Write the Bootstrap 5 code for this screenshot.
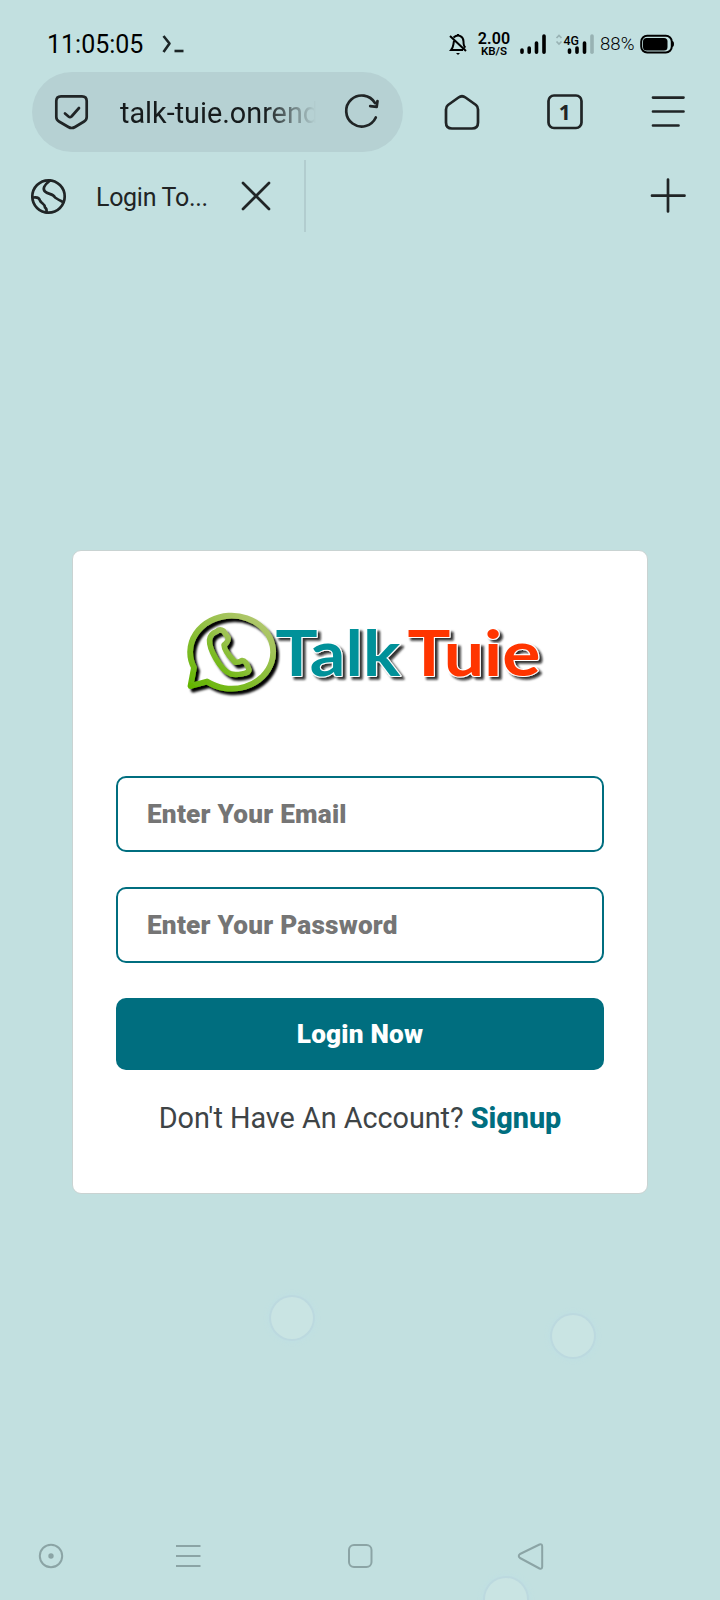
<!DOCTYPE html>
<html lang="en">
<head>
<meta charset="utf-8">
<meta name="viewport" content="width=device-width, initial-scale=1">
<title>Login To TalkTuie</title>
<link rel="stylesheet" href="https://cdn.jsdelivr.net/npm/bootstrap@5.3.0/dist/css/bootstrap.min.css">
<style>
body{background:#c2e0e0;font-family:Roboto,sans-serif;color:#202425;height:1600px}
.screen{width:720px;height:1600px}
svg{display:block;flex:none;overflow:visible}
.ico{fill:none;stroke:#202526;stroke-width:2.7;stroke-linecap:round;stroke-linejoin:round}
.status{height:72px;padding:15px 45px 0 47px;color:#000}
.clock{font-size:25px;letter-spacing:0;width:109px;line-height:1;padding-top:2px;font-weight:370}
.rate{width:34px;margin-right:9px;padding-top:2px}
.rate-num{font:600 16px/14px Roboto,sans-serif;letter-spacing:.1px}
.rate-unit{font:600 11.5px/11px Roboto,sans-serif}
.percent{font-size:18.6px;font-weight:300;width:38px;line-height:1;padding-left:2px;padding-top:1px}
.tools{height:80px;padding:0 34px 0 32px}
.address{width:371px;height:80px;border-radius:40px;background:#b6d1d3;padding:0 24px 0 22px}
.url{width:200px;font-size:28.8px;line-height:40px;margin-left:30px;padding-top:2px;overflow:hidden;color:#161b1c;
 -webkit-mask-image:linear-gradient(90deg,#000 72%,transparent 98%);mask-image:linear-gradient(90deg,#000 72%,transparent 98%)}
.home-key{margin-left:40px}
.count-key{margin-left:65px}
.tabs-row{height:88px;padding:0 34px 0 0}
.tab-item{width:306px;height:72px;border-right:2px solid #b2cdcf;padding-left:30px;margin-top:8px}
.tab-name{width:175px;padding-left:29px;padding-top:3px;font-size:25px;letter-spacing:-.3px;line-height:32px}
.page-area{height:1266px;padding-top:311px}
.login{width:576px;height:644px;border:1px solid #c9d3d2;border-radius:9px;padding:42px 43px;background:#fff;margin-top:-1px}
.logo-box{height:183px}
.field{height:76px;border:2px solid #006e7f;border-radius:10px;padding:0 29px;font-size:26.2px;font-weight:900;letter-spacing:.22px;margin-bottom:35px}
.field::placeholder{color:#757575;opacity:1}
.enter{height:72px;background:#006e7f;color:#fff;border:0;border-radius:10px;font-size:26.2px;font-weight:900;letter-spacing:.2px;padding-top:8px}
.ask{font-size:28.8px;line-height:40px;color:#3e4446;margin-top:28px;white-space:nowrap;letter-spacing:-.03px}
.ask a{color:#006e7f;font-weight:850}
.navkeys{height:94px;padding:36px 177px 0 38px}
.key{fill:none;stroke:#8ba4a5;stroke-width:2;stroke-linejoin:round}
.bubble{position:absolute;width:42px;height:42px;border-radius:50%;background:#c9e4e3;box-shadow:0 0 0 2px #bcd9df,0 0 5px 3px #bfdfe3}
</style>
</head>
<body>
<div class="screen position-relative overflow-hidden mx-auto">
 <header>
  <div class="status d-flex align-items-center">
   <span class="clock text-nowrap">11:05:05</span>
   <svg width="28" height="22" viewBox="156 33 28 22" fill="none" stroke="#1b2526" stroke-width="2.6"><path d="M163.500 36l6 7.500-6 8.500" stroke-linejoin="round"/><path d="M174.500 51h9" /></svg>
   <svg class="ms-auto" width="20" height="22" viewBox="448 33 20 22" fill="none" stroke="#000" stroke-width="2"><path d="M449 36l16 15M453 41c-1 4 0 5-3 9h12M452.500 37.500c5-4 10-1 10 4q0 5 2 6"/><path d="M455 53h4l-2 2zM456 34h2v2h-2z" fill="#000" stroke="none"/></svg>
   <div class="rate ms-2 text-center"><div class="rate-num">2.00</div><div class="rate-unit">KB/S</div></div>
   <svg width="78" height="22" viewBox="520 33 78 22"><g stroke="#000" stroke-width="3.6" stroke-linecap="round"><path d="M522 50v2.200M529.200 48v4.200M536.500 43v9.200M544 36v16.200M569.500 50v2.200M577 48v4.200M584.500 43v9.200"/><path d="M592 36v16.200" stroke="#98b2b3"/></g><path d="M556.500 38l2.500-2.500 2.500 2.500M556.500 41.500l2.500 2.500 2.500-2.500" fill="none" stroke="#98b2b3" stroke-width="1.700"/><text x="563.500" y="45.200" font-size="13" font-weight="500" textLength="15.500" lengthAdjust="spacingAndGlyphs">4G</text></svg>
   <span class="percent text-nowrap">88%</span>
   <svg class="ms-1" width="35" height="22" viewBox="640 33 35 22"><rect x="641.200" y="35.700" width="30.600" height="16.800" rx="6" fill="none" stroke="#000" stroke-width="2"/><rect x="643" y="38" width="24.500" height="12.500" rx="3.500"/><path d="M672 41q2 0 2 3t-2 3z"/></svg>
  </div>
  <div class="tools d-flex align-items-center">
   <div class="address d-flex align-items-center">
    <svg class="ico" width="36" height="38" viewBox="54 93 36 38"><path d="M61 96.400H82q4.700 0 4.700 4.700V117q0 3-2.600 4.500L75 127q-3.300 2-6.600 0L59 121.500q-2.700-1.500-2.700-4.500V101.100q0-4.700 4.700-4.700z"/><path d="M65 113.500l3.500 3q1.500 1.200 3 0l7.500-8.500"/></svg>
    <div class="url text-nowrap">talk-tuie.onrend</div>
    <svg class="ico ms-auto" width="36" height="38" viewBox="341.500 93 36 38"><path d="M374.300 117.500A15.500 15.500 0 1 1 373.500 103"/><path d="M376 101l-.8 5.800-6.500-.6"/></svg>
   </div>
   <svg class="ico home-key" width="38" height="38" viewBox="443 92.500 38 38"><path d="M448 104.500L458.500 97q3.500-2.500 7 0L476 104.500q2 1.500 2 4.500v13q0 6-6 6H452q-6 0-6-6V109q0-3 2-4.500z"/></svg>
   <svg class="ico count-key" width="38" height="38" viewBox="546 93 38 38"><rect x="548.500" y="95.500" width="33" height="32.500" rx="5.500"/><text x="558.700" y="119.800" font-size="21" font-family="Noto Sans" font-weight="700" stroke="none" fill="#202526">1</text></svg>
   <svg class="ico ms-auto" width="35" height="38" viewBox="651 93 35 38"><path d="M653 97.600h30.500M653 111.500h30.500M653 125.500h25.500"/></svg>
  </div>
  <div class="tabs-row d-flex">
   <div class="tab-item d-flex align-items-center">
    <svg class="ico" width="37" height="37" viewBox="30 177.500 37 37"><circle cx="48.500" cy="196" r="16.200"/><path d="M50 180q-9 7-5 11c3 3 8 2 10 6q3 2 7 4M33 197q6-1 7 3c1 3 5 3 5 7q2 1 1.500 5"/></svg>
    <span class="tab-name text-nowrap">Login To...</span>
    <svg class="ico" width="28" height="30" viewBox="242 181 28 30"><path d="M243 183l26 26M269 183l-26 26"/></svg>
   </div>
   <svg class="ico ms-auto mt-4" width="36" height="40" viewBox="650 176 36 40"><path d="M652 195.700h32.500M668 179.500v32"/></svg>
  </div>
 </header>
 <main class="page-area">
  <form class="login card mx-auto">
   <div class="logo-box">
    <svg width="488" height="120" viewBox="116 593 488 120" role="img" aria-label="Talk Tuie">
     <defs>
      <linearGradient id="leaf" x1="0" y1="1" x2=".75" y2="0"><stop offset="0" stop-color="#62b500"/><stop offset="1" stop-color="#b0c76c"/></linearGradient>
      <filter id="drop" x="-10%" y="-20%" width="125%" height="150%"><feDropShadow dx="3" dy="3.500" stdDeviation="1" flood-color="#000" flood-opacity="1"/></filter>
      <filter id="textdrop" x="-10%" y="-20%" width="125%" height="150%"><feDropShadow dx="3" dy="2.700" stdDeviation="1.200" flood-color="#111" flood-opacity=".85"/></filter>
     </defs>
     <g filter="url(#drop)" fill="none" stroke="url(#leaf)" stroke-width="5.800" stroke-linejoin="round">
      <path d="M194 667.500A41.500 36.500 0 1 1 207 681.500L190.500 686z"/>
      <path d="M216.500 631.500Q220 628.500 223.500 631L228 637.500Q229 641 224 645C224 650 231 658 235 662Q237 663 242 660.500Q246 660 249 670C249 674 236 675 231 674C220 670 209 649 209.500 640Q210 634 216.500 631.500z" stroke-width="5.500"/>
     </g>
     <g filter="url(#textdrop)" font-family="Lato,sans-serif" font-weight="700" font-size="63" stroke="#fff" stroke-width="2" stroke-linejoin="round" paint-order="stroke">
      <text x="275.500" y="675.500" textLength="125" lengthAdjust="spacingAndGlyphs" fill="#009199">Talk</text>
      <text x="407.500" y="675.500" textLength="133" lengthAdjust="spacingAndGlyphs" fill="#ff3600">Tuie</text>
     </g>
    </svg>
   </div>
   <input class="field form-control" type="email" placeholder="Enter Your Email">
   <input class="field form-control" type="password" placeholder="Enter Your Password">
   <button class="enter btn w-100" type="button">Login Now</button>
   <div class="ask text-center">Don't Have An Account? <a class="text-decoration-none" href="#">Signup</a></div>
  </form>
 </main>
 <span class="bubble" style="left:271px;top:1297px"></span>
 <span class="bubble" style="left:552px;top:1315px"></span>
 <span class="bubble" style="left:485px;top:1578px"></span>
 <footer class="navkeys d-flex justify-content-between align-items-start">
  <svg class="key" width="26" height="28" viewBox="38 1542 26 28"><circle cx="51" cy="1556" r="11.200"/><circle cx="51" cy="1556" r="2.700" fill="#8ba4a5" stroke="none"/></svg>
  <svg class="key" style="margin-left:35px" width="26" height="28" viewBox="175 1542 26 28"><path d="M176 1546h24.500M176 1556h24.500M176 1566h24.500"/></svg>
  <svg class="key" style="margin-left:71px" width="26" height="28" viewBox="347 1542 26 28"><rect x="349" y="1545" width="22.500" height="22" rx="5"/></svg>
  <svg class="key" style="margin-left:68px" width="26" height="28" viewBox="517 1542 26 28"><path d="M539.500 1544.500L520 1554q-2.500 2 0 4l19.500 10.500q2.700 1 2.700-2v-20q0-3-2.700-2z"/></svg>
 </footer>
</div>
<script src="https://cdn.jsdelivr.net/npm/bootstrap@5.3.0/dist/js/bootstrap.bundle.min.js"></script>
</body>
</html>
